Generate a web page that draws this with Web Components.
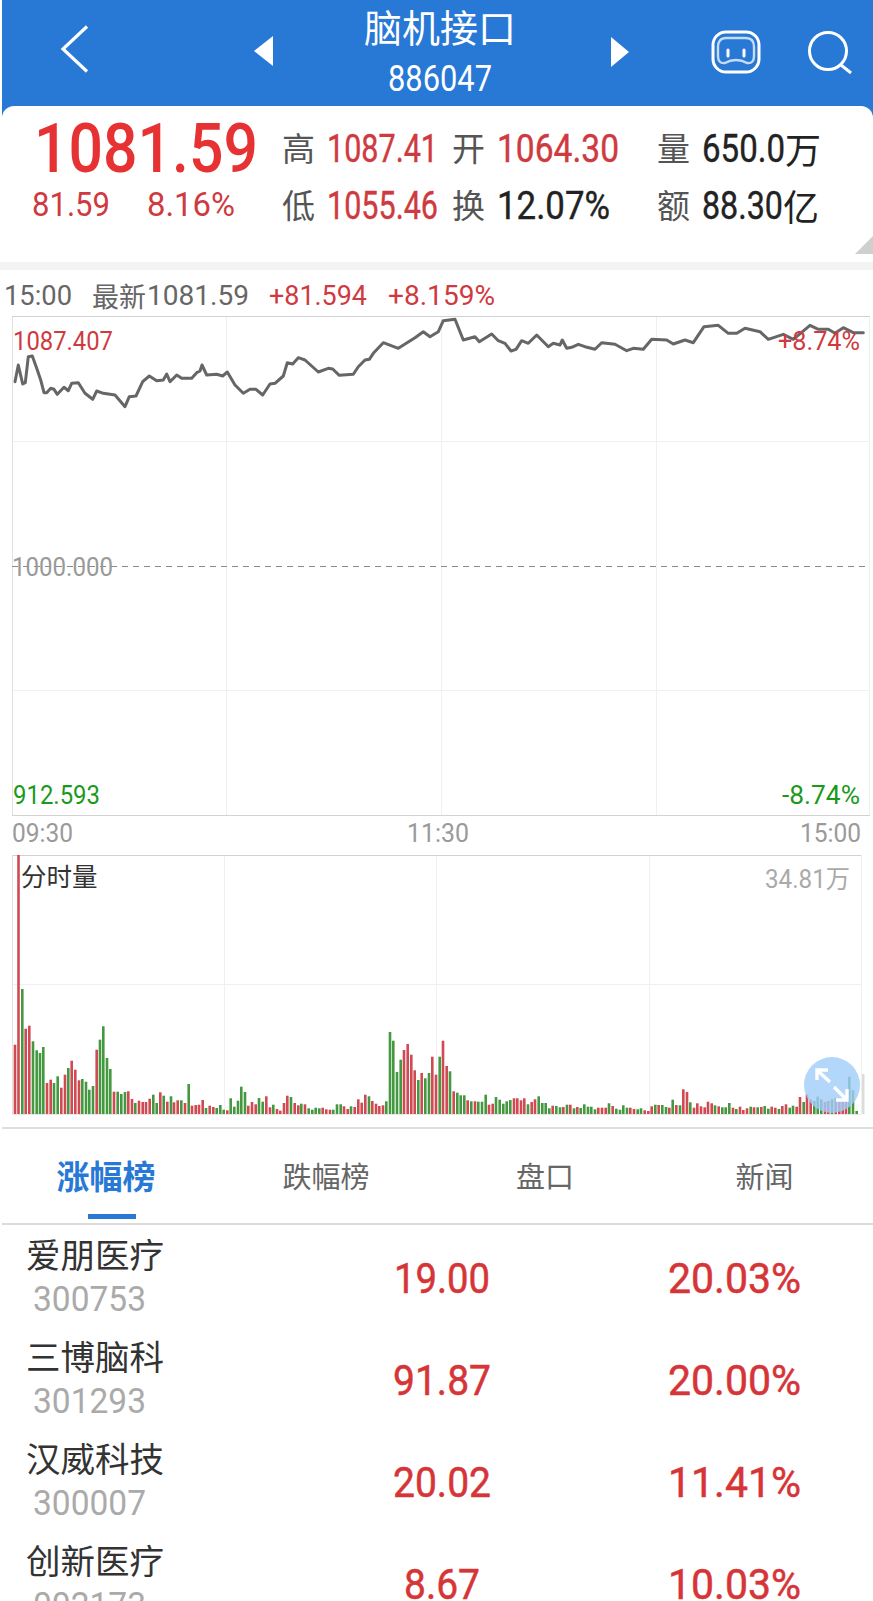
<!DOCTYPE html>
<html lang="zh">
<head>
<meta charset="utf-8">
<title>脑机接口</title>
<style>
  html, body { margin: 0; padding: 0; background: #fff; }
  body {
    width: 873px; height: 1601px; overflow: hidden;
    font-family: Roboto, "Noto Sans CJK SC", sans-serif;
  }
</style>
</head>
<body>
<app-header title-text="脑机接口" code="886047"></app-header>
<quote-summary></quote-summary>
<trend-chart></trend-chart>
<volume-chart></volume-chart>
<rank-tabs></rank-tabs>
<rank-row name="爱朋医疗" code="300753" price="19.00" price-w="96" pct="20.03%"></rank-row>
<rank-row name="三博脑科" code="301293" price="91.87" price-w="98" pct="20.00%"></rank-row>
<rank-row name="汉威科技" code="300007" price="20.02" price-w="98" pct="11.41%"></rank-row>
<rank-row name="创新医疗" code="002173" price="8.67" price-w="76" pct="10.03%"></rank-row>

<script>
const html = String.raw;
const DIGITS = `Roboto, "Noto Sans CJK SC", sans-serif`;

// the app's digits are a narrow DIN, so squeeze Roboto to the width seen in the reference
class FitNum extends HTMLElement {
  constructor() {
    super();
    const root = this.attachShadow({ mode: "open" });
    root.innerHTML = html`
      <style>
        :host { display: inline-block; white-space: nowrap; vertical-align: top; }
        span { display: inline-block; transform-origin: 0 50%; }
      </style>
      <span><slot></slot></span>`;
    this.inner = root.querySelector("span");
  }

  connectedCallback() {
    const target = Number(this.getAttribute("w"));
    const natural = this.inner.getBoundingClientRect().width;
    if (!target || !natural) return;
    this.inner.style.transform = `scaleX(${target / natural})`;
    this.style.width = target + "px";
  }
}
customElements.define("fit-num", FitNum);

class AppHeader extends HTMLElement {
  constructor() {
    super();
    const root = this.attachShadow({ mode: "open" });
    root.innerHTML = html`
      <style>
        :host { display: block; margin-left: 2px; height: 106px; background: #2878d6; color: #fff; }
        .bar { display: grid; grid-template-columns: 272px 332px 105px 97px 1fr; height: 106px; }
        svg { display: block; }
        .left { display: flex; align-items: flex-start; }
        .back { margin: 25px 0 0 58px; }
        .prev { margin: 36px 0 0 164px; }
        .title { display: flex; flex-direction: column; align-items: center; }
        .name { font: 38px/38px "Noto Sans CJK SC", sans-serif; margin-top: 7px; }
        .code { font: 36px/36px ${DIGITS}; margin-top: 16px; }
        .next { margin: 37px 0 0 4px; }
        .robot { margin: 30px 0 0 0; }
        .search { margin: 30px 0 0 0; }
      </style>
      <div class="bar">
        <div class="left">
          <svg class="back" width="30" height="48" viewBox="0 0 30 48" fill="none" stroke="#fff" stroke-width="3.2">
            <path d="M27 1.5 L3 24 L27 46.5"/>
          </svg>
          <svg class="prev" width="20" height="30" viewBox="0 0 20 30"><path d="M19 0 L0 15 L19 30 Z" fill="#fff"/></svg>
        </div>
        <div class="title">
          <span class="name">${this.getAttribute("title-text")}</span>
          <span class="code"><fit-num w="104">${this.getAttribute("code")}</fit-num></span>
        </div>
        <div>
          <svg class="next" width="20" height="30" viewBox="0 0 20 30"><path d="M1 0 L19 15 L1 30 Z" fill="#fff"/></svg>
        </div>
        <div>
          <svg class="robot" width="50" height="44" viewBox="0 0 50 44" fill="none">
            <rect x="2" y="2" width="46" height="40" rx="13" stroke="#fff" stroke-width="3"/>
            <path d="M15 8 H35 Q43 8 43 17 V26 Q43 34 36 33 Q31 30 25 30 Q19 30 14 33 Q7 34 7 26 V17 Q7 8 15 8 Z" stroke="#c4dcf7" stroke-width="2.4"/>
            <path d="M17 20 V26 M33 20 V26" stroke="#fff" stroke-width="3" stroke-linecap="round"/>
          </svg>
        </div>
        <div>
          <svg class="search" width="46" height="44" viewBox="0 0 46 44" fill="none" stroke="#fff" stroke-width="3">
            <circle cx="20" cy="21" r="18.5"/>
            <path d="M33 35 L43 43"/>
          </svg>
        </div>
      </div>`;
  }
}
customElements.define("app-header", AppHeader);

class QuoteStat extends HTMLElement {
  constructor() {
    super();
    const root = this.attachShadow({ mode: "open" });
    root.innerHTML = html`
      <style>
        :host { display: flex; height: 57px; }
        .k { font: 33px/57px "Noto Sans CJK SC", sans-serif; color: #555; width: 45px; flex: none; }
        .v { font: 38px/61px ${DIGITS}; -webkit-text-stroke: 0.4px; white-space: nowrap; display: flex; }
        .u { font: 36px/58px "Noto Sans CJK SC", sans-serif; -webkit-text-stroke: 0; }
        :host([tone="up"]) .v { color: #cf3a40; }
        :host([tone="flat"]) .v { color: #222; }
      </style>
      <span class="k">${this.getAttribute("k")}</span>
      <span class="v"><fit-num w="${this.getAttribute("w")}">${this.getAttribute("v")}</fit-num><span class="u">${this.getAttribute("unit") || ""}</span></span>`;
  }
}
customElements.define("quote-stat", QuoteStat);

class QuoteSummary extends HTMLElement {
  constructor() {
    super();
    const root = this.attachShadow({ mode: "open" });
    root.innerHTML = html`
      <style>
        :host { display: block; margin-left: 2px; height: 156px; background: #2878d6; position: relative; }
        .card {
          background: #fff; border-radius: 12px 12px 0 0; height: 156px;
          display: grid; grid-template-columns: 280px 170px 205px 1fr; box-sizing: border-box; padding-top: 13px;
        }
        .price { font: 500 69px/56px ${DIGITS}; color: #e63232; padding: 2px 0 0 32px; }
        .change { display: flex; gap: 37px; font: 33px/56px ${DIGITS}; color: #cf3a40; padding-left: 30px; }
        .corner {
          position: absolute; right: 0; top: 130px; width: 0; height: 0;
          border-left: 18px solid transparent; border-bottom: 18px solid #cfcfcf;
        }
      </style>
      <div class="card">
        <div>
          <div class="price"><fit-num w="224">1081.59</fit-num></div>
          <div class="change"><fit-num w="78">81.59</fit-num><fit-num w="88">8.16%</fit-num></div>
        </div>
        <div>
          <quote-stat k="高" v="1087.41" w="111" tone="up"></quote-stat>
          <quote-stat k="低" v="1055.46" w="111" tone="up"></quote-stat>
        </div>
        <div>
          <quote-stat k="开" v="1064.30" w="122" tone="up"></quote-stat>
          <quote-stat k="换" v="12.07%" w="113" tone="flat"></quote-stat>
        </div>
        <div>
          <quote-stat k="量" v="650.0" w="83" unit="万" tone="flat"></quote-stat>
          <quote-stat k="额" v="88.30" w="81" unit="亿" tone="flat"></quote-stat>
        </div>
      </div>
      <div class="corner"></div>`;
  }
}
customElements.define("quote-summary", QuoteSummary);

// line points read off the crops of the chart, at 3x
const zoomA = [[45,275],[55,225],[68,282],[76,278],[85,200],[97,198],[110,235],[122,270],[132,308],[140,308],[152,295],[162,298],[172,313],[192,292],[205,302],[215,280],[235,278],[255,310],[278,328],[290,303],[310,310],[330,313],[345,315],[375,350],[388,320],[408,318],[428,275],[448,258],[470,272],[490,270],[500,252],[510,275],[530,255],[545,265],[575,265],[590,248],[600,243],[606,225],[620,255],[650,253],[668,258],[682,246],[705,285],[730,310],[750,298],[768,298],[788,315],[810,282],[825,280],[850,258],[862,218],[878,222],[895,203],[915,210],[955,246],[985,235],[998,237],[1018,256],[1060,253],[1075,230],[1095,210],[1108,208],[1120,190],[1150,158],[1195,175],[1245,143],[1270,125],[1290,140]];
const zoomB = [[25,125],[40,92],[75,88],[100,150],[135,140],[148,155],[185,132],[205,152],[225,160],[243,183],[258,178],[275,152],[295,160],[320,135],[355,170],[370,160],[390,165],[397,150],[410,175],[425,172],[445,163],[465,170],[495,178],[515,158],[555,163],[590,182],[610,175],[640,178],[665,148],[710,150],[730,162],[765,150],[790,158],[822,110],[865,106],[895,130],[920,130],[945,115],[990,125],[1015,148],[1060,133],[1090,148],[1140,106],[1165,118],[1195,118],[1215,130],[1240,113],[1270,128],[1300,128]];
const linePts = [...zoomA.map(([x, y]) => [x / 3, y / 3]), ...zoomB.map(([x, y]) => [430 + x / 3, y / 3])]
  .map(([x, y]) => `${x.toFixed(1)},${(y + 290).toFixed(1)}`).join(" ");

class TrendChart extends HTMLElement {
  constructor() {
    super();
    const root = this.attachShadow({ mode: "open" });
    root.innerHTML = html`
      <style>
        :host { display: block; position: relative; height: 585px; border-top: 8px solid #f3f3f3; }
        .info {
          display: flex; height: 50px; font: 28px/52px ${DIGITS};
          color: #666; padding-left: 4px; white-space: nowrap;
        }
        .info .up { color: #cf3a40; }
        .info .cjk { font: 27px/52px "Noto Sans CJK SC", sans-serif; }
        svg { position: absolute; left: 0; top: 0; }
        text { font-family: ${DIGITS}; font-size: 26px; }
      </style>
      <div class="info">
        <fit-num w="68" style="margin-right:20px">15:00</fit-num>
        <span class="cjk" style="width:55px">最新</span>
        <fit-num w="102" style="margin-right:20px">1081.59</fit-num>
        <fit-num w="98" class="up" style="margin-right:21px">+81.594</fit-num>
        <fit-num w="107" class="up">+8.159%</fit-num>
      </div>
      <svg width="873" height="585" viewBox="0 270 873 585">
        <g fill="none" stroke="#f0f0f0" stroke-width="1">
          <path d="M226.5 316V815 M441.5 316V815 M656.5 316V815 M869.5 316V815 M12.5 441.5H870 M12.5 690.5H870"/>
          <path d="M12.5 316V815" stroke="#e2e2e2"/>
        </g>
        <path d="M12 316.5H870 M12 815.5H870" stroke="#d2d2d2" stroke-width="1.2" fill="none"/>
        <path d="M12 566.5H870" stroke="#8a8a8a" stroke-width="1.2" stroke-dasharray="6 5" fill="none"/>
        <polyline points="${linePts}" fill="none" stroke="#666" stroke-width="3" stroke-linejoin="round" stroke-linecap="round"/>
        <text x="13" y="350" fill="#cf3a40" textLength="100" lengthAdjust="spacingAndGlyphs">1087.407</text>
        <text x="778" y="350" fill="#cf3a40" textLength="82" lengthAdjust="spacingAndGlyphs">+8.74%</text>
        <text x="12" y="576" fill="#999" textLength="101" lengthAdjust="spacingAndGlyphs">1000.000</text>
        <text x="13" y="804" fill="#1a9a1a" textLength="87" lengthAdjust="spacingAndGlyphs">912.593</text>
        <text x="782" y="804" fill="#1a9a1a" textLength="78" lengthAdjust="spacingAndGlyphs">-8.74%</text>
        <text x="12" y="842" fill="#9a9a9a" textLength="61" lengthAdjust="spacingAndGlyphs">09:30</text>
        <text x="407" y="842" fill="#9a9a9a" textLength="62" lengthAdjust="spacingAndGlyphs">11:30</text>
        <text x="800" y="842" fill="#9a9a9a" textLength="61" lengthAdjust="spacingAndGlyphs">15:00</text>
      </svg>`;
  }
}
customElements.define("trend-chart", TrendChart);

// bar tops read from crops: x and top are in crop units (3x), with the crop's baseline
const barsA = "45r255 67g88 77r207 88r198 99g245 110g272 120g280 130g262 141r370 152r360 162g370 173g350 184r384 195r345 205g325 215r303 226r330 237r362 247g358 258g366 268g390 279g379 290r270 300g240 310g200 321g295 331g328 342r396 353g396 364g403 375g397 385r395 396r418 406g430 417r423 428r427 438r427 449r417 460g405 470g430 481r398 491g408 502r426 513g410 522r428 533r422 544g422 555r430 566g373 576r438 587r436 597r435 608r421 618g445 629r438 640r442 650g445 661g436 671g450 682r452 692g416 703g441 714g423 724g381 735g397 745r438 756r427 767r434 777g415 788g426 799r410 810r443 820g435 831r448 841r453 852r430 862r408 873g412 884r430 895r437";
const barsB = "34g313 45r315 56g327 67g331 77g325 88g327 98r325 109r330 120r331 130g331 141g315 152g315 162r321 173r329 183g321 194r323 205r300 215r310 226r286 237g291 247r305 258r313 268r320 279r318 289g306 300g98 310g124 321g218 332g181 342r152 353r134 364r166 374r213 385g242 395r221 406g237 417g221 427r172 438r226 449g172 459r124 470r200 480g216 491r276 502g280 512g288 523g288 533r303 544g306 555r306 565g307 576g307 587g286 597r316 608r313 618g293 629g301 640g313 650g306 661g302 672r297 682r297 693r303 703r297 714g315 725r308 735r300 746g291 757g311 767g311 778g327 788r319 799g320 810g324 820r323 831g316 841r316 852g327 862r323";
const barsC = "32g326 43g315 54g322 64g322 75g330 85r325 96r325 107r325 117g312 128r320 139g328 150g331 160g318 171g325 181r325 192r329 203g330 213g327 224r333 235r335 245r321 256g316 266r317 277g317 288g323 298r325 308g301 319r317 330g318 340r270 351r278 361g309 372r325 382r312 393r321 404r324 414r307 425r312 435g318 446r321 457g324 467g324 478g311 489r325 499g329 510r322 520r332 531r327 542g322 552r324 563g324 574r323 584g320 595g328 605r322 616r325 627g329 637r320 648r315 659g325 669g319 680r322 690r293 701g308 711r285 722r300 733g305 743g292 754g300 765r308 775r305 786g300 797r296 808r296 818r296 828r296 838g232 849g273 860g335";

function barRects() {
  const out = [`<rect x="17.2" y="0" width="2.6" height="259" fill="#cf4a52"/>`];
  const add = (list, offset, base) => {
    for (const item of list.split(" ")) {
      const [, x, c, top] = item.match(/(\d+)([rg])(\d+)/);
      const h = (base - top) / 3;
      const color = c === "r" ? "#cf4a52" : "#44983f";
      out.push(`<rect x="${(offset + x / 3 - 1.3).toFixed(1)}" y="${(259 - h).toFixed(1)}" width="2.6" height="${h.toFixed(1)}" fill="${color}"/>`);
    }
  };
  add(barsA, 0, 463);
  add(barsB, 290, 344);
  add(barsC, 570, 344);
  return out.join("");
}

class VolumeChart extends HTMLElement {
  constructor() {
    super();
    const root = this.attachShadow({ mode: "open" });
    root.innerHTML = html`
      <style>
        :host { display: block; position: relative; height: 272px; border-bottom: 2px solid #dedede; margin-left: 2px; }
        svg { position: absolute; left: -2px; top: 0; }
        .fab {
          position: absolute; left: 802px; top: 202px; width: 56px; height: 56px; border-radius: 50%;
          background: rgba(160, 205, 250, 0.8);
        }
      </style>
      <svg width="873" height="272" viewBox="0 0 873 272">
        <path d="M224.5 0V259 M436.5 0V259 M649.5 0V259 M861.5 0V259 M12 129.5H861" stroke="#f0f0f0" fill="none"/>
        <path d="M12 0.5H861" stroke="#d2d2d2" stroke-width="1.2"/>
        <path d="M12.5 0V259" stroke="#e2e2e2"/>
        ${barRects()}
        <path d="M12 259.5H861" stroke="#e8e8e8"/>
        <rect x="862" y="219" width="2.5" height="40" fill="#dcdcdc"/>
        <text x="21" y="31" font-size="25.5" fill="#333" font-family="Noto Sans CJK SC">分时量</text>
        <text x="765" y="33" font-size="25" fill="#aaa" font-family="Roboto, Noto Sans CJK SC" textLength="85" lengthAdjust="spacingAndGlyphs">34.81万</text>
      </svg>
      <div class="fab">
        <svg style="position:absolute;left:0;top:0" width="56" height="56" viewBox="0 0 56 56" fill="none" stroke="#fff" stroke-width="3.4">
          <path d="M14 14 L26 25 M13 23 V13 H24"/>
          <path d="M30 30 L42 42 M43 32 V43 H32"/>
        </svg>
      </div>`;
  }
}
customElements.define("volume-chart", VolumeChart);

class RankTabs extends HTMLElement {
  constructor() {
    super();
    const root = this.attachShadow({ mode: "open" });
    root.innerHTML = html`
      <style>
        :host { display: block; margin-left: 2px; height: 96px; box-sizing: border-box; border-bottom: 2px solid #dcdcdc; }
        .tabs { display: grid; grid-template-columns: 218px 218px 218px 217px; height: 94px; font-family: "Noto Sans CJK SC", sans-serif; }
        .tab { position: relative; display: flex; justify-content: center; padding-top: 23px; font-size: 29px; line-height: 46px; color: #666; }
        .tab.on { color: #2878d6; font-size: 33px; font-weight: 700; padding-right: 10px; }
        .tab.on::after { content: ""; position: absolute; left: 86px; bottom: 4px; width: 48px; height: 5px; background: #2878d6; }
        .t2 { padding-right: 6px; } .t3 { padding-right: 4px; } .t4 { padding-right: 0; }
      </style>
      <div class="tabs">
        <div class="tab on">涨幅榜</div>
        <div class="tab t2">跌幅榜</div>
        <div class="tab t3">盘口</div>
        <div class="tab t4">新闻</div>
      </div>`;
  }
}
customElements.define("rank-tabs", RankTabs);

class RankRow extends HTMLElement {
  constructor() {
    super();
    const root = this.attachShadow({ mode: "open" });
    root.innerHTML = html`
      <style>
        :host { display: block; height: 102px; margin-left: 2px; }
        .row { display: grid; grid-template-columns: 300px 280px 1fr; height: 102px; }
        .who { padding: 5px 0 0 24px; }
        .name { font: 34.5px/46px "Noto Sans CJK SC", sans-serif; color: #333; white-space: nowrap; }
        .code { font: 35px/38px ${DIGITS}; color: #aaa; padding: 5px 0 0 7px; }
        .num { font: 42px/100px ${DIGITS}; -webkit-text-stroke: 0.5px; color: #d63538; text-align: center; padding-top: 4px; }
        .pct { padding-left: 14px; }
      </style>
      <div class="row">
        <div class="who">
          <div class="name">${this.getAttribute("name")}</div>
          <div class="code"><fit-num w="113">${this.getAttribute("code")}</fit-num></div>
        </div>
        <div class="num price"><fit-num w="${this.getAttribute("price-w")}">${this.getAttribute("price")}</fit-num></div>
        <div class="num pct"><fit-num w="133">${this.getAttribute("pct")}</fit-num></div>
      </div>`;
  }
}
customElements.define("rank-row", RankRow);
</script>
</body>
</html>
